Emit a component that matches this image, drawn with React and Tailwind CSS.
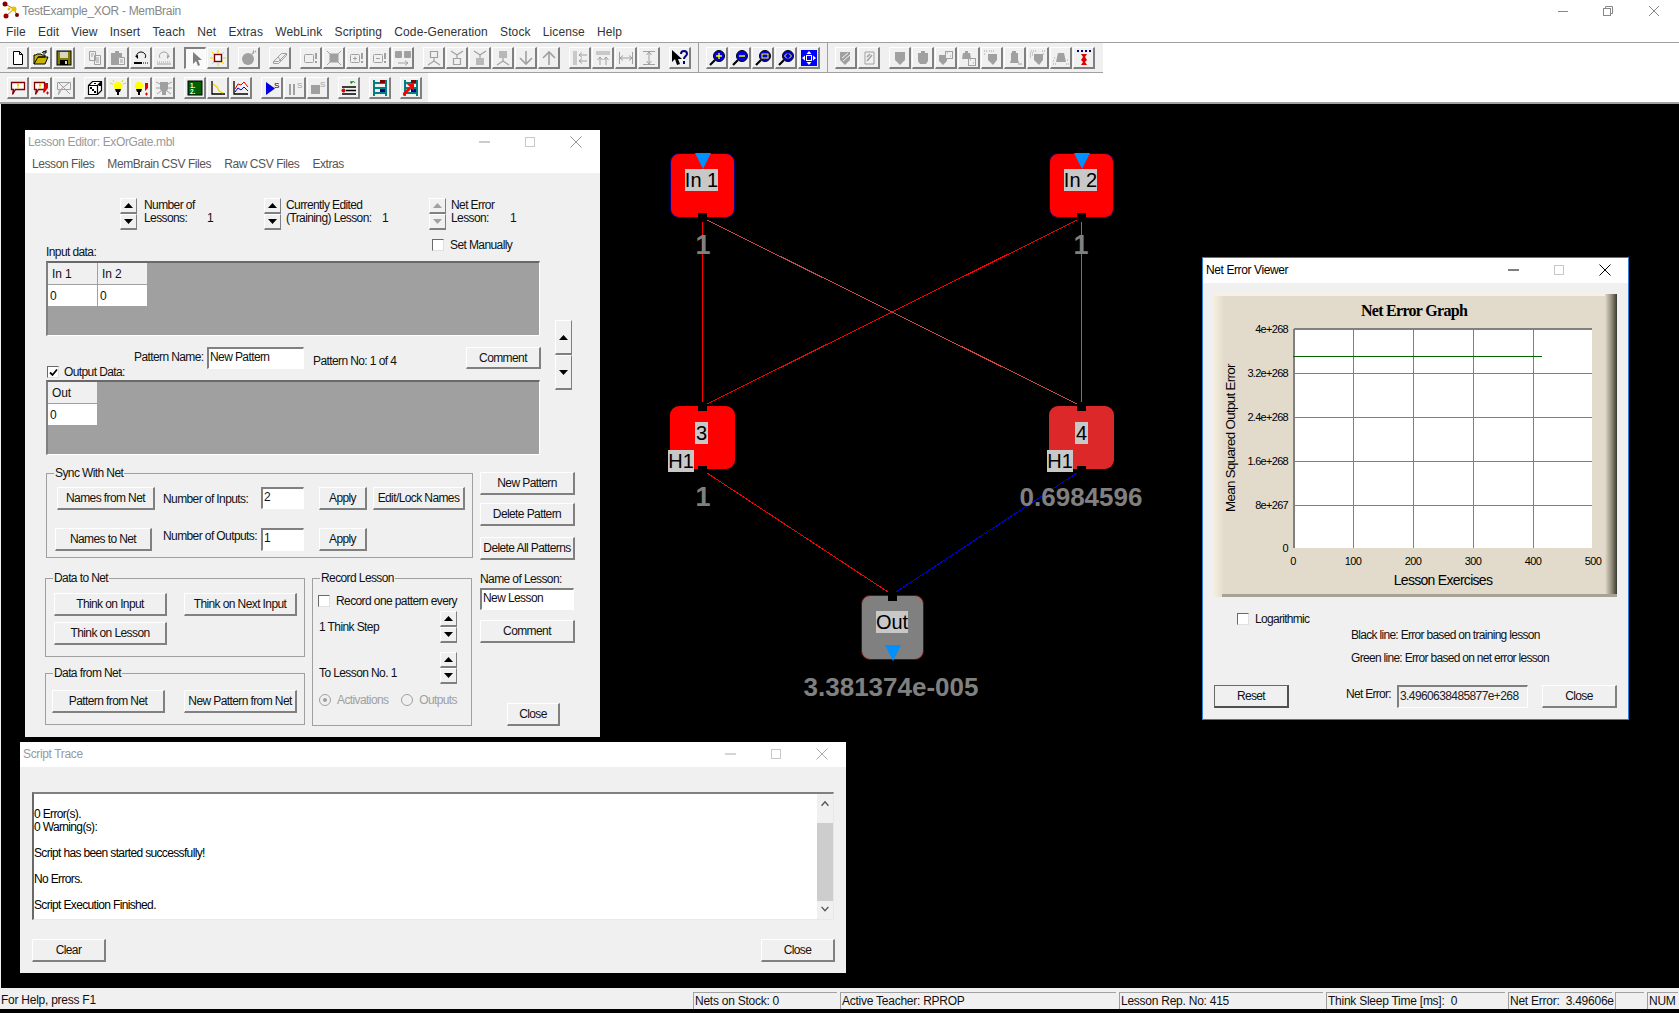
import React from "react";

const G = "#a0a0a0";

// toolbar glyphs, drawn on a 16x16 grid
const icons = {
  new: <path d="M3.5 1.5h6l3 3v10h-9zM9.5 1.5v3h3" fill="#fff" stroke="#000" />,
  open: (
    <>
      <path d="M1 14V5h2l1-1h4l1 1h3v2H5l-4 7h11l3-7H5" fill="#c8b400" stroke="#000" />
      <path d="M9 3c1-2 3-2 4-1M13 0v3h-3" fill="none" stroke="#000" />
    </>
  ),
  save: (
    <>
      <rect x="1" y="1" width="14" height="14" fill="#808000" stroke="#000" />
      <rect x="4" y="2" width="8" height="6" fill="#d8d8c0" />
      <rect x="4" y="10" width="8" height="5" fill="#000" />
      <rect x="9" y="11" width="2" height="3" fill="#d8d8c0" />
    </>
  ),
  copy: <path d="M2.5 1.5h6v9h-6zM7.5 5.5h6v9h-6zM4 4h3M4 6h2M9 8h3M9 10h3M9 12h3" fill="#f0f0f0" stroke={G} />,
  paste: (
    <>
      <path d="M1 3h4V1h4v2h3v4H8v8H1z" fill={G} />
      <path d="M8.5 7.5h6v7h-6zM10 10h3M10 12h3" fill="#f0f0f0" stroke={G} />
    </>
  ),
  undo: (
    <>
      <path d="M5 8C2 5 5 2 8 2s6 3 4 6" fill="none" stroke="#000" />
      <path d="M2 6l3 3V5z" fill="#000" />
      <path d="M1 12h8v2H1z" fill="#000" />
      <path d="M10 13h5" stroke="#000" strokeDasharray="1 1" />
    </>
  ),
  redo: (
    <>
      <path d="M11 8c3-3 0-6-3-6S2 5 4 8" fill="none" stroke={G} />
      <path d="M14 6l-3 3V5z" fill={G} />
      <path d="M1 12h14" stroke={G} strokeDasharray="1 1" />
      <path d="M1 14h14" stroke={G} />
    </>
  ),
  arrow: <path d="M5 1v12l3-3 2 5 2-1-2-5h4z" fill="#808080" />,
  select: (
    <>
      <rect x="4.5" y="4.5" width="7" height="7" fill="#fff" stroke="#800000" strokeWidth="1.4" />
      <path d="M8 0v3M8 13v3M0 8h3M13 8h3M2 2l2 2M14 2l-2 2M2 14l2-2M14 14l-2-2" stroke="#e8d800" />
    </>
  ),
  bomb: (
    <>
      <circle cx="7" cy="9" r="6" fill={G} />
      <path d="M11 4l2-2M14 1l1 1M12 1l1 0" stroke={G} strokeWidth="1.5" />
    </>
  ),
  eraser: <path d="M1.5 11.5l8-8h5l-8 8h-5zM1.5 11.5v2h5l8-8v-2M6 7l3 4" fill="none" stroke={G} />,
  nodeBang: (
    <>
      <rect x="1.5" y="4.5" width="9" height="8" rx="1" fill="none" stroke={G} />
      <path d="M13 3v6M13 11v2" stroke={G} strokeWidth="2" />
    </>
  ),
  nodeX: <path d="M4 4h8v8H4zM1 1l3 3M15 1l-3 3M1 15l3-3M15 15l-3-3" fill={G} stroke={G} />,
  plusBang: (
    <>
      <rect x="1.5" y="4.5" width="9" height="8" rx="1" fill="none" stroke={G} />
      <path d="M4 8.5h4M6 6.5v4" stroke={G} />
      <path d="M13 3v6M13 11v2" stroke={G} strokeWidth="2" />
    </>
  ),
  minusBang: (
    <>
      <rect x="1.5" y="4.5" width="9" height="8" rx="1" fill="none" stroke={G} />
      <path d="M4 8.5h4" stroke={G} />
      <path d="M13 3v6M13 11v2" stroke={G} strokeWidth="2" />
    </>
  ),
  merge: (
    <>
      <rect x="0" y="1" width="7" height="7" rx="1" fill={G} />
      <rect x="9" y="1" width="7" height="7" rx="1" fill={G} />
      <path d="M3 13h10M10 10.5l3 2.5-3 2.5" fill="none" stroke={G} />
    </>
  ),
  fig1: <path d="M4.5 1.5h7v6h-7zM8 8v3M8 11l-6 4M8 11l6 4" fill="none" stroke={G} strokeWidth="1.2" />,
  fig2: <path d="M4.5 8.5h7v6h-7zM8 8V5M8 5L2 1M8 5l6-4" fill="none" stroke={G} strokeWidth="1.2" />,
  fig3: (
    <>
      <path d="M8 8V5M8 5L2 1M8 5l6-4" fill="none" stroke={G} strokeWidth="1.2" />
      <path d="M4 8h8v7H4z" fill={G} opacity="0.7" />
    </>
  ),
  fig4: (
    <>
      <path d="M4 1h8v7H4z" fill={G} opacity="0.7" />
      <path d="M8 8v3M8 11l-6 4M8 11l6 4" fill="none" stroke={G} strokeWidth="1.2" />
    </>
  ),
  down: <path d="M8 1v13M2 8l6 6 6-6" fill="none" stroke={G} strokeWidth="1.6" />,
  up: <path d="M8 15V2M2 8l6-6 6 6" fill="none" stroke={G} strokeWidth="1.6" />,
  alignL: <path d="M2 1v14M4 1v14M15 5H7M10 2.5L7 5l3 2.5M15 11H7M10 8.5L7 11l3 2.5" fill="none" stroke={G} />,
  alignT: <path d="M1 2h14M1 4h14M5 15V7M2.5 10L5 7l2.5 3M11 15V7M8.5 10L11 7l2.5 3" fill="none" stroke={G} />,
  spreadH: <path d="M1.5 2v12M14.5 2v12M2 8h12M5 5.5L2 8l3 2.5M11 5.5L14 8l-3 2.5" fill="none" stroke={G} />,
  spreadV: <path d="M2 1.5h12M2 14.5h12M8 2v12M5.5 5L8 2l2.5 3M5.5 11L8 14l2.5-3" fill="none" stroke={G} />,
  help: (
    <>
      <path d="M0 0v12l3-3 2 6 3-1-2-5h4z" fill="#000" />
      <path d="M9 4c0-4 6-4 6 0 0 2-3 2-3 5" fill="none" stroke="#000080" strokeWidth="2" />
      <path d="M11 11h2v3h-2z" fill="#000080" />
    </>
  ),
  move: (
    <>
      <rect x="0" y="0" width="16" height="16" fill="#0000ff" />
      <path d="M8 1l2.5 3h-5zM8 15l2.5-3h-5zM1 8l3-2.5v5zM15 8l-3-2.5v5z" fill="#fff" />
      <rect x="5.5" y="5.5" width="5" height="5" fill="none" stroke="#fff" />
    </>
  ),
  shield1: (
    <>
      <path d="M2 2h10v8l-5 5-5-5z" fill={G} />
      <path d="M4 8l6-5M5 11l7-6" stroke="#f0f0f0" />
    </>
  ),
  shield2: (
    <>
      <path d="M4 2h9v12H4z" fill="none" stroke={G} />
      <path d="M6 11l5-6M6 7l3-3" stroke={G} strokeWidth="1.5" />
    </>
  ),
  shield3: <path d="M3 2h10v8l-5 5-5-5z" fill={G} />,
  shield4: <path d="M6 1h4v2h3v8l-2 3H5l-2-3V3h3z" fill={G} />,
  shield5: (
    <>
      <path d="M1 5h8v6l-4 4-4-4z" fill={G} />
      <rect x="7.5" y="1.5" width="7" height="7" fill="#f0f0f0" stroke={G} />
      <path d="M9 3h1M12 6h1" stroke={G} />
    </>
  ),
  shield6: (
    <>
      <path d="M4 1h3v2h2l1 6H1l1-6h2z" fill={G} />
      <rect x="7.5" y="8.5" width="7" height="7" fill="#f0f0f0" stroke={G} />
      <path d="M9 10h1M12 13h1" stroke={G} />
    </>
  ),
  shield7: (
    <>
      <path d="M4 4h9v6l-4 5-5-5z" fill={G} />
      <path d="M0 1h3M0 4h2M5 1h6" stroke={G} strokeDasharray="1 1" />
    </>
  ),
  shield8: (
    <>
      <path d="M5 1h4v2h2v7l1 3H3l1-3V3h1z" fill={G} />
      <path d="M14 13v2M12 13v2" stroke={G} />
    </>
  ),
  shield9: (
    <>
      <path d="M1 1h6M0 3h4M0 5h4M0 7h2M12 1h3M13 4h2" stroke={G} strokeDasharray="1 1" />
      <path d="M4 4h9v6l-4 5-5-5z" fill={G} />
    </>
  ),
  shield10: (
    <>
      <path d="M5 3h6l2 9H3z" fill={G} />
      <path d="M0 14h3M0 11h2M1 8h1M13 14h3M14 10h1" stroke={G} strokeDasharray="1 1" />
    </>
  ),
  zigzag: (
    <>
      <path d="M1 1h14" stroke="#000080" strokeWidth="2" strokeDasharray="2 2" />
      <path d="M5 4h6l-2 3 2 3-2 2 2 3H5l2-3-2-2 2-3z" fill="#e00000" />
    </>
  ),
  bubble: (
    <>
      <path d="M1.5 2.5h13v7h-9l-3 5 1-5h-2z" fill="#fff" stroke="#800000" strokeWidth="1.3" />
      <path d="M7 3.5h2v3H7zM7 7.5h2v1H7z" fill="#e8d800" />
    </>
  ),
  bubblePen: (
    <>
      <path d="M1.5 2.5h10v7h-6l-3 5 1-5h-2z" fill="#fff" stroke="#800000" strokeWidth="1.3" />
      <path d="M6 3.5h2v3H6zM6 7.5h2v1H6z" fill="#e8d800" />
      <path d="M12 3h3v5l-4 5-1-1z" fill="#e00000" />
      <path d="M13 13h3M14.5 11.5v3" stroke="#e00000" />
    </>
  ),
  bubbleOff: <path d="M1.5 2.5h13v7h-9l-3 5 1-5h-2zM2 2l12 12M14 2L4 10" fill="#f0f0f0" stroke={G} />,
  dice: (
    <>
      <path d="M1.5 5.5l4-4h9v9l-4 4h-9zM1.5 5.5h9v9M10.5 5.5l4-4" fill="#fff" stroke="#000" strokeWidth="1.2" />
      <path d="M3 7h2v2H3zM7 11h2v2H7zM5 9h2v2H5zM12 4h2v2h-2zM7 3h2v1H7z" fill="#000" />
    </>
  ),
  bulb: (
    <>
      <path d="M8 2a4 4 0 0 1 3 7H5a4 4 0 0 1 3-7z" fill="#ffff00" />
      <path d="M5 9h6l-1 3H6zM7 12h2v3H7z" fill="#000" />
      <path d="M0 3l3 1M16 3l-3 1M3 0l1 2M13 0l-1 2" stroke="#e8d800" />
    </>
  ),
  bulbPen: (
    <>
      <path d="M6 2a4 4 0 0 1 3 7H3a4 4 0 0 1 3-7z" fill="#ffff00" />
      <path d="M3 9h6l-1 3H4zM5 12h2v3H5z" fill="#000" />
      <path d="M12 3h3v5l-3 3z" fill="#e00000" />
      <path d="M12 14h3M13.5 12.5v3" stroke="#e00000" />
    </>
  ),
  bulbOff: (
    <>
      <path d="M4 2h8v7l-2 3v3H6v-3L4 9z" fill={G} />
      <path d="M0 2l4 2M16 2l-4 2M0 8h4M16 8h-4M1 14l4-3M15 14l-4-3" stroke={G} />
    </>
  ),
  board: (
    <>
      <rect x="1" y="1" width="14" height="14" fill="#006000" stroke="#000" />
      <text x="3" y="7.5" fontSize="6.5" fontWeight="700" fill="#fff" fontFamily="Liberation Sans">1.</text>
      <text x="3" y="13.5" fontSize="6.5" fontWeight="700" fill="#fff" fontFamily="Liberation Sans">2.</text>
    </>
  ),
  graph: (
    <>
      <path d="M2 1v13h13" fill="none" stroke="#000" strokeWidth="1.3" />
      <path d="M3 4l4 3 2 4 4 2" fill="none" stroke="#e8d800" strokeWidth="1.3" />
    </>
  ),
  graph2: (
    <>
      <path d="M1 1v13h14" fill="none" stroke="#000" strokeWidth="1.3" />
      <path d="M2 9l3-5 3 1 3-3 4 5" fill="none" stroke="#e00000" />
      <path d="M2 12l3-4 3 2 3-3 4 4" fill="none" stroke="#0000e0" />
    </>
  ),
  play: (
    <>
      <path d="M2 2v13l9-6.5z" fill="#0000e0" />
      <text x="10" y="8" fontSize="8" fill="#000" fontFamily="Liberation Sans">S</text>
    </>
  ),
  pause: (
    <>
      <path d="M2 4h2v11H2zM6 4h2v11H6z" fill={G} />
      <text x="10" y="8" fontSize="8" fill={G} fontFamily="Liberation Sans">S</text>
    </>
  ),
  stop: (
    <>
      <rect x="1" y="5" width="9" height="9" fill={G} />
      <text x="10" y="7" fontSize="8" fill={G} fontFamily="Liberation Sans">S</text>
    </>
  ),
  list: (
    <>
      <path d="M1 7h14M5 10.5h10M1 14h14" stroke="#000" strokeWidth="1.6" />
      <circle cx="2.5" cy="10.5" r="2" fill="#e00000" />
      <path d="M10 3c1-2 3-2 4 0" fill="none" stroke="#008000" />
      <path d="M9 1l3 1-2 2z" fill="#008000" />
    </>
  ),
  ladder: (
    <>
      <path d="M2 0v16M14 0v16M2 3h12M2 8h12M2 13h12" fill="none" stroke="#008080" strokeWidth="2" />
      <rect x="8" y="0" width="5" height="3" fill="#800000" />
      <rect x="8" y="9" width="5" height="3" fill="#000080" />
    </>
  ),
  ladderGo: (
    <>
      <path d="M2 0v16M14 0v16M2 3h12M2 8h12M2 13h12" fill="none" stroke="#008080" strokeWidth="2" />
      <rect x="8" y="0" width="5" height="3" fill="#800000" />
      <rect x="8" y="9" width="5" height="3" fill="#000080" />
      <path d="M0 15l7-7" stroke="#ff0000" strokeWidth="3" />
      <path d="M4 4h7v7z" fill="#ff0000" />
    </>
  ),
};

function Lens({ kind }) {
  return (
    <svg width="16" height="16" viewBox="0 0 16 16">
      <path d="M6 10l-5 5" stroke="#000" strokeWidth="2.2" />
      <circle cx="10" cy="6" r="5.5" fill="#0000e0" stroke="#000" />
      {kind === "in" && <path d="M7 6h6M10 3v6" stroke="#ffff00" strokeWidth="1.4" />}
      {kind === "out" && <path d="M7 6h6" stroke="#ffff00" strokeWidth="1.4" />}
      {kind === "box" && <rect x="7" y="4" width="6" height="4" fill="none" stroke="#ffff00" />}
      {kind === "fit" && <path d="M9 3.5L6.5 6 9 8.5M11 3.5L13.5 6 11 8.5" fill="none" stroke="#ffff00" />}
    </svg>
  );
}

function ToolBtn({ name, pressed }) {
  const lens = { zoomIn: "in", zoomOut: "out", zoomBox: "box", zoomFit: "fit" }[name];
  return (
    <div
      className={
        pressed
          ? "w-[22px] h-[22px] mr-px flex items-center justify-center bg-[#fafafa] border-t-2 border-l-2 border-r border-b border-t-[#808080] border-l-[#808080] border-r-white border-b-white"
          : "w-[22px] h-[22px] mr-px flex items-center justify-center bg-[#f0f0f0] border-t border-l border-r-2 border-b-2 border-t-white border-l-white border-r-[#808080] border-b-[#808080]"
      }
    >
      {lens ? (
        <Lens kind={lens} />
      ) : (
        <svg width="16" height="16" viewBox="0 0 16 16">
          {icons[name]}
        </svg>
      )}
    </div>
  );
}

function ToolRow({ groups, className }) {
  return (
    <div className={className}>
      {groups.map((g, i) =>
        g === "|" ? (
          <div key={i} className="w-px h-[30px] -mt-[4px] -ml-[2px] -mr-px bg-[#a0a0a0]" />
        ) : (
          <div key={i} className="flex">
            {g.map((n) => (
              <ToolBtn key={n} name={n} pressed={n === "arrow"} />
            ))}
          </div>
        )
      )}
    </div>
  );
}

const row1 = [
  ["new", "open", "save"],
  ["copy", "paste", "undo", "redo"],
  ["arrow", "select"],
  ["bomb"],
  ["eraser"],
  ["nodeBang", "nodeX", "plusBang", "minusBang", "merge"],
  ["fig1", "fig2", "fig3", "fig4", "down", "up"],
  ["alignL", "alignT", "spreadH", "spreadV"],
  ["help"],
  "|",
  ["zoomIn", "zoomOut", "zoomBox", "zoomFit", "move"],
  "|",
  ["shield1", "shield2"],
  ["shield3", "shield4", "shield5", "shield6", "shield7", "shield8", "shield9", "shield10", "zigzag"],
];

const row2 = [
  ["bubble", "bubblePen", "bubbleOff"],
  ["dice", "bulb", "bulbPen", "bulbOff"],
  ["board", "graph", "graph2"],
  ["play", "pause", "stop"],
  ["list"],
  ["ladder"],
  ["ladderGo"],
];

const menu = ["File", "Edit", "View", "Insert", "Teach", "Net", "Extras", "WebLink", "Scripting", "Code-Generation", "Stock", "License", "Help"];

function WinBtns({ color }) {
  return (
    <svg width="103" height="12" viewBox="0 0 103 12">
      <path d="M0 6h11" stroke={color} />
      <rect x="46.5" y="1.5" width="9" height="9" fill="none" stroke="#c8c8c8" />
      <path d="M91.5 0.5l11 11M102.5 0.5l-11 11" stroke={color} />
    </svg>
  );
}

function Btn({ children, className }) {
  return (
    <div
      className={
        "flex items-center justify-center shrink-0 whitespace-nowrap text-[12px] tracking-[-0.6px] text-[#111] bg-[#f0f0f0] border-t border-l border-r-2 border-b-2 border-t-white border-l-white border-r-[#808080] border-b-[#808080] " +
        className
      }
    >
      {children}
    </div>
  );
}

function Field({ children, className }) {
  return (
    <div
      className={
        "shrink-0 flex items-start pl-[1px] pt-[1px] whitespace-nowrap text-[12px] leading-[14px] tracking-[-0.6px] text-[#111] border-t-2 border-l-2 border-r border-b border-t-[#808080] border-l-[#808080] border-r-white border-b-white " +
        className
      }
    >
      {children}
    </div>
  );
}

function Spin({ disabled }) {
  const c = disabled ? "#a0a0a0" : "#000";
  const box =
    "w-[17px] h-[16px] flex items-center justify-center bg-[#f0f0f0] border-t border-l border-r border-b-2 border-t-white border-l-white border-r-[#808080] border-b-[#808080]";
  return (
    <div className="flex flex-col shrink-0">
      <div className={box}>
        <svg width="9" height="5" viewBox="0 0 9 5"><path d="M4.5 0L9 5H0z" fill={c} /></svg>
      </div>
      <div className={box}>
        <svg width="9" height="5" viewBox="0 0 9 5"><path d="M4.5 5L0 0h9z" fill={c} /></svg>
      </div>
    </div>
  );
}

function TallSpin() {
  const box =
    "w-[17px] h-[35px] flex items-center justify-center bg-[#f0f0f0] border-t border-l border-r border-b-2 border-t-white border-l-white border-r-[#808080] border-b-[#808080]";
  return (
    <div className="flex flex-col">
      <div className={box}>
        <svg width="9" height="5" viewBox="0 0 9 5"><path d="M4.5 0L9 5H0z" fill="#000" /></svg>
      </div>
      <div className={box}>
        <svg width="9" height="5" viewBox="0 0 9 5"><path d="M4.5 5L0 0h9z" fill="#000" /></svg>
      </div>
    </div>
  );
}

function Check({ checked }) {
  return (
    <div className="w-[12px] h-[12px] shrink-0 bg-white border-t border-l border-r border-b border-t-[#696969] border-l-[#696969] border-r-[#e0e0e0] border-b-[#e0e0e0] flex items-center justify-center">
      {checked && (
        <svg width="9" height="9" viewBox="0 0 9 9">
          <path d="M1 4.5l2.5 2.5L8 1.5" fill="none" stroke="#000" strokeWidth="1.8" />
        </svg>
      )}
    </div>
  );
}

function Radio({ dot }) {
  return (
    <svg width="12" height="12" viewBox="0 0 12 12" className="shrink-0">
      <circle cx="6" cy="6" r="5.5" fill="#f0f0f0" stroke="#a0a0a0" />
      {dot && <circle cx="6" cy="6" r="2" fill="#a0a0a0" />}
    </svg>
  );
}

function Group({ title, children, className }) {
  return (
    <fieldset className={"border border-[#a0a0a0] min-w-0 shrink-0 " + className}>
      <legend className="ml-[7px] px-[1px] text-[12px] leading-[12px] tracking-[-0.6px] text-[#111]">{title}</legend>
      {children}
    </fieldset>
  );
}

function GridCell({ head, children }) {
  return (
    <div
      className={
        head
          ? "h-[21px] pl-[4px] flex items-center text-[12px] tracking-[-0.1px] bg-[#f0f0f0] text-[#111]"
          : "h-[21px] pl-[2px] flex items-center text-[12px] bg-white text-[#111]"
      }
    >
      {children}
    </div>
  );
}

function DataGrid({ heads }) {
  return (
    <div className="w-[494px] h-[75px] bg-[#a0a0a0] border-t-2 border-l-2 border-r border-b border-t-[#696969] border-l-[#808080] border-r-white border-b-white">
      <div
        className={
          heads.length === 2
            ? "grid w-fit grid-cols-[49px_49px] gap-px"
            : "grid w-fit grid-cols-[49px] gap-px"
        }
      >
        {heads.map((h) => (
          <GridCell key={h} head>{h}</GridCell>
        ))}
        {heads.map((h) => (
          <GridCell key={h}>0</GridCell>
        ))}
      </div>
    </div>
  );
}

function LessonEditor() {
  return (
    <div className="absolute left-[24px] top-[26px] w-[575px] h-[607px] flex flex-col bg-[#f0f0f0]">
      <div className="h-[24px] pb-[1px] bg-white flex items-center justify-between pl-[3px] pr-[18px] shrink-0">
        <span className="text-[12px] tracking-[-0.36px] text-[#999]">Lesson Editor: ExOrGate.mbl</span>
        <WinBtns color="#999" />
      </div>
      <div className="h-[19px] pt-[1px] bg-white flex items-center pl-[7px] gap-[13px] shrink-0 text-[12px] tracking-[-0.42px] text-[#555]">
        <span>Lesson Files</span>
        <span>MemBrain CSV Files</span>
        <span>Raw CSV Files</span>
        <span>Extras</span>
      </div>

      <div className="flex pl-[95px] mt-[25px] h-[32px] text-[12px] leading-[13px] tracking-[-0.6px] text-[#111]">
        <div className="flex w-[144px]">
          <Spin />
          <div className="ml-[7px] w-[63px] pt-px">Number of<br />Lessons:</div>
          <div className="mt-[14px]">1</div>
        </div>
        <div className="flex w-[165px]">
          <Spin />
          <div className="ml-[5px] w-[96px] pt-px">Currently Edited<br />(Training) Lesson:</div>
          <div className="mt-[14px]">1</div>
        </div>
        <div className="flex">
          <Spin disabled />
          <div className="ml-[5px] w-[59px] pt-px">Net Error<br />Lesson:</div>
          <div className="mt-[14px]">1</div>
        </div>
      </div>

      <div className="flex h-[31px] text-[12px] tracking-[-0.6px] text-[#111]">
        <div className="ml-[21px] mt-[15px] leading-[14px] w-[386px]">Input data:</div>
        <div className="flex items-center gap-[6px] mt-[9px] h-[12px]">
          <Check />
          <span>Set Manually</span>
        </div>
      </div>

      <div className="flex pl-[21px] h-[194px]">
        <div className="flex flex-col w-[495px]">
          <DataGrid heads={["In 1", "In 2"]} />
          <div className="flex h-[44px] text-[12px] leading-[14px] tracking-[-0.6px] text-[#111]">
            <div className="flex items-center gap-[5px] w-[88px] h-[12px] mt-[30px] pl-[1px]">
              <Check checked />
              <span className="whitespace-nowrap">Output Data:</span>
            </div>
            <div className="w-[73px] mt-[14px] whitespace-nowrap">Pattern Name:</div>
            <Field className="w-[97px] h-[22px] mt-[11px] bg-white">New Pattern</Field>
            <div className="ml-[9px] mt-[18px] whitespace-nowrap">Pattern No: 1 of 4</div>
            <Btn className="w-[75px] h-[22px] mt-[11px] ml-auto">Comment</Btn>
          </div>
          <DataGrid heads={["Out"]} />
        </div>
        <div className="ml-[14px] mt-[59px]">
          <TallSpin />
        </div>
      </div>

      <div className="flex pl-[20px]">
        <div className="flex flex-col w-[435px]">
          <Group title="Sync With Net" className="ml-[1px] mt-[12px] w-[427px]">
            <div className="h-[78px] pt-[8px] flex flex-col gap-[18px] text-[12px] tracking-[-0.6px] text-[#111]">
              <div className="flex">
                <Btn className="ml-[10px] w-[98px] h-[23px]">Names from Net</Btn>
                <div className="ml-[8px] w-[98px] mt-[3px] leading-[18px] whitespace-nowrap">Number of Inputs:</div>
                <Field className="w-[43px] h-[22px] bg-white">2</Field>
                <Btn className="ml-[15px] w-[48px] h-[23px]">Apply</Btn>
                <Btn className="ml-[6px] w-[92px] h-[23px]">Edit/Lock Names</Btn>
              </div>
              <div className="flex">
                <Btn className="ml-[8px] w-[97px] h-[23px]">Names to Net</Btn>
                <div className="ml-[11px] w-[98px] leading-[16px] whitespace-nowrap">Number of Outputs:</div>
                <Field className="w-[43px] h-[23px] bg-white">1</Field>
                <Btn className="ml-[15px] w-[48px] h-[23px]">Apply</Btn>
              </div>
            </div>
          </Group>
          <div className="flex mt-[14px]">
            <div className="flex flex-col w-[267px]">
              <Group title="Data to Net" className="w-[260px]">
                <div className="h-[72px] pt-[9px] pl-[8px]">
                  <div className="flex gap-[17px]">
                    <Btn className="w-[113px] h-[23px]">Think on Input</Btn>
                    <Btn className="w-[113px] h-[23px]">Think on Next Input</Btn>
                  </div>
                  <Btn className="w-[113px] h-[23px] mt-[6px]">Think on Lesson</Btn>
                </div>
              </Group>
              <Group title="Data from Net" className="w-[260px] mt-[10px]">
                <div className="h-[45px] pt-[11px] pl-[6px] flex gap-[19px]">
                  <Btn className="w-[113px] h-[23px]">Pattern from Net</Btn>
                  <Btn className="w-[113px] h-[23px]">New Pattern from Net</Btn>
                </div>
              </Group>
            </div>
            <Group title="Record Lesson" className="w-[160px]">
              <div className="h-[141px] pl-[5px] pr-[14px] pt-[11px] text-[12px] leading-[14px] tracking-[-0.6px] text-[#111]">
                <div className="flex items-center gap-[6px] h-[12px] whitespace-nowrap">
                  <Check />
                  <span>Record one pattern every</span>
                </div>
                <div className="flex items-center justify-between mt-[4px] pl-[1px]">
                  <span>1 Think Step</span>
                  <Spin />
                </div>
                <div className="flex items-center justify-between mt-[9px] pl-[1px]">
                  <span className="mt-[9px]">To Lesson No. 1</span>
                  <Spin />
                </div>
                <div className="flex items-center h-[12px] mt-[10px] pl-px text-[#a0a0a0]">
                  <Radio dot />
                  <span className="ml-[6px] w-[73px]">Activations</span>
                  <Radio />
                  <span className="ml-[6px]">Outputs</span>
                </div>
              </div>
            </Group>
          </div>
        </div>
        <div className="flex flex-col w-[95px] mt-[17px] text-[12px] tracking-[-0.6px] text-[#111]">
          <Btn className="w-[95px] h-[23px]">New Pattern</Btn>
          <Btn className="w-[95px] h-[23px] mt-[8px]">Delete Pattern</Btn>
          <Btn className="w-[95px] h-[23px] mt-[11px]">Delete All Patterns</Btn>
          <div className="mt-[12px] h-[16px] leading-[14px] whitespace-nowrap">Name of Lesson:</div>
          <Field className="w-[94px] h-[22px] bg-white">New Lesson</Field>
          <Btn className="w-[95px] h-[23px] mt-[10px]">Comment</Btn>
          <Btn className="w-[53px] h-[23px] mt-[60px] ml-[27px]">Close</Btn>
        </div>
      </div>
    </div>
  );
}

function ErrorChart() {
  const vLines = [139, 199, 259, 319];
  const hLines = [79, 123, 167, 211];
  const yLabels = [["4e+268", 35], ["3.2e+268", 79], ["2.4e+268", 123], ["1.6e+268", 167], ["8e+267", 211], ["0", 254]];
  const xLabels = [["0", 79], ["100", 139], ["200", 199], ["300", 259], ["400", 319], ["500", 379]];
  return (
    <svg width="403" height="303" viewBox="0 0 403 303" className="block" fontFamily="Liberation Sans">
      <defs>
        <linearGradient id="chartL"><stop offset="0" stopColor="#f6eedb" /><stop offset="1" stopColor="#e2dbcc" /></linearGradient>
        <linearGradient id="chartR"><stop offset="0" stopColor="#e2dbcc" /><stop offset="0.6" stopColor="#8a8474" /><stop offset="1" stopColor="#3a3830" /></linearGradient>
      </defs>
      <rect width="403" height="303" fill="#e2dbcc" />
      <rect width="10" height="303" fill="url(#chartL)" />
      <rect x="391" width="12" height="303" fill="url(#chartR)" />
      <rect width="391" height="2" fill="#f8f1e0" />
      <rect x="8" y="300" width="395" height="3" fill="#a8a294" />
      <text x="200" y="22" textAnchor="middle" fontFamily="Liberation Serif" fontWeight="700" fontSize="16" fill="#000">Net Error Graph</text>
      <rect x="80" y="35" width="298" height="219" fill="#fff" />
      {vLines.map((x) => <path key={x} d={`M${x + 0.5} 35V254`} stroke="#808080" />)}
      {hLines.map((y) => <path key={y} d={`M80 ${y + 0.5}H378`} stroke="#808080" />)}
      <path d="M80 35V254M80 35H378" stroke="#808080" strokeWidth="2" fill="none" />
      <path d="M79 62.5H328" stroke="#006400" />
      {yLabels.map(([t, y]) => <text key={t} x="74" y={y + 4} textAnchor="end" fontSize="11" fill="#000">{t}</text>)}
      {xLabels.map(([t, x]) => <text key={t} x={x} y="271" textAnchor="middle" fontSize="11" fill="#000">{t}</text>)}
      <text x="229" y="291" textAnchor="middle" fontSize="14" fill="#000">Lesson Exercises</text>
      <text transform="translate(21 144) rotate(-90)" textAnchor="middle" fontSize="13.4" fill="#000">Mean Squared Output Error</text>
    </svg>
  );
}

function NetErrorViewer() {
  return (
    <div className="absolute left-[1201px] top-[153px] w-[427px] h-[463px] flex flex-col bg-[#f0f0f0] border border-[#2f7fd6] text-[12px] tracking-[-0.7px] text-[#111]">
      <div className="h-[25px] pb-[2px] bg-white flex items-center justify-between pl-[3px] pr-[17px] shrink-0 tracking-[-0.4px]">
        <span className="text-[#000]">Net Error Viewer</span>
        <WinBtns color="#000" />
      </div>
      <div className="ml-[11px] mt-[11px]">
        <ErrorChart />
      </div>
      <div className="flex items-center gap-[6px] ml-[34px] mt-[16px] h-[12px]">
        <Check />
        <span>Logarithmic</span>
      </div>
      <div className="ml-[148px] mt-[3px] leading-[14px]">Black line: Error based on training lesson</div>
      <div className="ml-[148px] mt-[9px] leading-[14px]">Green line: Error based on net error lesson</div>
      <div className="flex mt-[20px] ml-[11px]">
        <div className="w-[75px] h-[23px] flex items-center justify-center bg-[#f0f0f0] border border-r-2 border-b-2 border-t-[#696969] border-l-[#696969] border-r-[#505050] border-b-[#505050]">Reset</div>
        <div className="ml-[57px] w-[51px] leading-[18px] whitespace-nowrap">Net Error:</div>
        <Field className="w-[131px] h-[23px] pt-[2px] text-[#222]">3.4960638485877e+268</Field>
        <Btn className="w-[75px] h-[23px] ml-[14px]">Close</Btn>
      </div>
    </div>
  );
}

const traceLines = ["", "0 Error(s).", "0 Warning(s):", "", "Script has been started successfully!", "", "No Errors.", "", "Script Execution Finished."];

function ScriptTrace() {
  return (
    <div className="absolute left-[19px] top-[638px] w-[826px] h-[231px] flex flex-col bg-[#f0f0f0]">
      <div className="h-[25px] pb-[2px] bg-white flex items-center justify-between pl-[3px] pr-[18px] shrink-0">
        <span className="text-[12px] tracking-[-0.36px] text-[#999]">Script Trace</span>
        <WinBtns color="#aaa" />
      </div>
      <div className="ml-[12px] mt-[25px] w-[802px] h-[128px] flex bg-white border-t-2 border-l-2 border-r border-b border-t-[#808080] border-l-[#696969] border-r-[#e8e8e8] border-b-[#e8e8e8]">
        <div className="flex-1 pt-[1px] text-[12px] leading-[13px] tracking-[-0.65px] text-[#000]">
          {traceLines.map((l, i) => (
            <div key={i} className="h-[13px]">{l}</div>
          ))}
        </div>
        <div className="w-[16px] flex flex-col items-center bg-[#f0f0f0]">
          <svg width="10" height="18" viewBox="0 0 10 18"><path d="M1.5 12L5 8l3.5 4" fill="none" stroke="#555" strokeWidth="1.4" /></svg>
          <div className="w-[16px] h-[80px] mt-[11px] bg-[#cdcdcd]" />
          <svg width="10" height="18" viewBox="0 0 10 18" className="mt-auto"><path d="M1.5 6L5 10l3.5-4" fill="none" stroke="#555" strokeWidth="1.4" /></svg>
        </div>
      </div>
      <div className="flex justify-between ml-[12px] mr-[11px] mt-[19px]">
        <Btn className="w-[74px] h-[23px]">Clear</Btn>
        <Btn className="w-[74px] h-[23px]">Close</Btn>
      </div>
    </div>
  );
}

function Marker({ className }) {
  return (
    <svg width="16" height="16" viewBox="0 0 16 16" className={"absolute " + className}>
      <path d="M0 0h16L8 16z" fill="#0090ff" />
    </svg>
  );
}

function Notch({ className }) {
  return <div className={"absolute w-[9px] h-[7px] bg-black " + className} />;
}

function NodeLabel({ children, className }) {
  return (
    <div className={"absolute h-[22px] flex items-center justify-center whitespace-nowrap bg-[#c8c8c8] text-[20px] text-black " + className}>
      {children}
    </div>
  );
}

function Value({ children, className }) {
  return (
    <div className={"absolute -translate-x-1/2 -translate-y-1/2 font-bold text-[#808080] whitespace-nowrap leading-none " + className}>
      {children}
    </div>
  );
}

function NetCanvas() {
  return (
    <>
      <svg width="1678" height="884" viewBox="0 0 1678 884" className="absolute left-0 top-0" shapeRendering="crispEdges">
        <path d="M701.5 118V298" stroke="#ff0000" />
        <path d="M706 116L1076 300" stroke="#c84848" />
        <path d="M1076 116L706 300" stroke="#ff0000" />
        <path d="M1080.5 118V298" stroke="#b05a68" />
        <path d="M706 369L887 488" stroke="#ff0000" />
        <path d="M1076 369L895 488" stroke="#0000e0" />
      </svg>

      <div className="absolute left-[669px] top-[49px] w-[65px] h-[65px] rounded-[9px] bg-[#ff0000] border border-[#000080]" />
      <Marker className="left-[694px] top-[49px]" />
      <NodeLabel className="left-[684px] top-[65px] w-[33px]">In 1</NodeLabel>
      <Notch className="left-[697px] top-[109px]" />

      <div className="absolute left-[1048px] top-[49px] w-[65px] h-[65px] rounded-[9px] bg-[#ff0000] border border-[#000080]" />
      <Marker className="left-[1073px] top-[49px]" />
      <NodeLabel className="left-[1063px] top-[65px] w-[33px]">In 2</NodeLabel>
      <Notch className="left-[1076px] top-[109px]" />

      <div className="absolute left-[669px] top-[302px] w-[65px] h-[63px] rounded-[9px] bg-[#ff0000]" />
      <NodeLabel className="left-[694px] top-[318px] w-[13px]">3</NodeLabel>
      <NodeLabel className="left-[667px] top-[346px] w-[26px]">H1</NodeLabel>
      <Notch className="left-[697px] top-[300px]" />
      <Notch className="left-[697px] top-[362px]" />

      <div className="absolute left-[1048px] top-[302px] w-[65px] h-[63px] rounded-[9px] bg-[#dc2828]" />
      <NodeLabel className="left-[1074px] top-[318px] w-[13px]">4</NodeLabel>
      <NodeLabel className="left-[1046px] top-[346px] w-[26px]">H1</NodeLabel>
      <Notch className="left-[1076px] top-[300px]" />
      <Notch className="left-[1076px] top-[362px]" />

      <div className="absolute left-[860px] top-[491px] w-[63px] h-[65px] rounded-[9px] bg-[#808080] border border-[#800000]" />
      <NodeLabel className="left-[875px] top-[507px] w-[32px]">Out</NodeLabel>
      <Marker className="left-[884px] top-[541px]" />
      <Notch className="left-[887px] top-[490px]" />

      <Value className="left-[702px] top-[141px] text-[27px]">1</Value>
      <Value className="left-[1080px] top-[141px] text-[27px]">1</Value>
      <Value className="left-[702px] top-[393px] text-[27px]">1</Value>
      <Value className="left-[1080px] top-[393px] text-[26px]">0.6984596</Value>
      <Value className="left-[890px] top-[583px] text-[26px]">3.381374e-005</Value>
    </>
  );
}

const statusPanes = [
  ["Nets on Stock: 0", "w-[144px]"],
  ["Active Teacher: RPROP", "w-[276px]"],
  ["Lesson Rep. No: 415", "w-[204px]"],
  ["Think Sleep Time [ms]:  0", "w-[179px]"],
  ["Net Error:  3.49606e", "w-[104px]"],
  ["", "w-[29px]"],
  ["NUM", "w-[31px]"],
];

export default function App() {
  return (
    <div
      className="w-[1679px] h-[1013px] flex flex-col overflow-hidden bg-black"
      style={{ fontFamily: '"Liberation Sans", Arial, sans-serif' }}
    >
      <div className="h-[21px] bg-white flex items-center justify-between shrink-0">
        <div className="flex items-center">
          <svg width="19" height="19" viewBox="0 0 19 19" className="ml-px">
            <path d="M4 3l9 5-8 7M13 8l3 6" stroke="#c08000" fill="none" />
            <circle cx="4" cy="3" r="2.5" fill="#800000" />
            <circle cx="13" cy="8" r="2.5" fill="#e8c000" />
            <circle cx="5" cy="15" r="2.5" fill="#a00000" />
            <circle cx="16" cy="14" r="2" fill="#800000" />
            <circle cx="8" cy="8" r="1.5" fill="#e8c000" />
          </svg>
          <span className="ml-[2px] text-[12px] tracking-[-0.3px] text-[#888]">TestExample_XOR - MemBrain</span>
        </div>
        <svg width="101" height="12" viewBox="0 0 101 12" className="mr-[20px]">
          <path d="M0 6.5h10" stroke="#888" />
          <rect x="45.5" y="3.5" width="7" height="7" fill="none" stroke="#888" />
          <path d="M47.5 3.5v-2h7v7h-2" fill="none" stroke="#888" />
          <path d="M91 1l10 10M101 1L91 11" stroke="#888" />
        </svg>
      </div>
      <div className="h-[21px] bg-white flex items-center shrink-0 text-[12px] text-[#333]">
        {menu.map((m) => (
          <span key={m} className="px-[6.1px] tracking-[0.1px]">{m}</span>
        ))}
      </div>
      <div className="h-[1px] bg-[#a0a0a0] shrink-0" />
      <div className="h-[30px] bg-white shrink-0">
        <ToolRow groups={row1} className="w-[1103px] h-[30px] flex gap-[8px] pl-[7px] pt-[4px] bg-[#f0f0f0] border-b border-b-[#a0a0a0]" />
      </div>
      <div className="h-[29px] bg-white shrink-0">
        <ToolRow groups={row2} className="w-[428px] h-[29px] flex gap-[8px] pl-[7px] pt-[4px] bg-[#f0f0f0]" />
      </div>
      <div className="h-[2px] bg-[#a0a0a0] shrink-0" />
      <div className="relative h-[884px] shrink-0 bg-black border-l border-l-[#f0f0f0]">
        <NetCanvas />
        <LessonEditor />
        <NetErrorViewer />
        <ScriptTrace />
      </div>
      <div className="h-[21px] bg-[#f0f0f0] flex items-center shrink-0 text-[12px] tracking-[-0.25px] text-[#111]">
        <span className="pl-px w-[693px] mt-[3px]">For Help, press F1</span>
        <div className="flex gap-[3px]">
          {statusPanes.map(([t, w], i) => (
            <div
              key={i}
              className={"h-[17px] mt-[3px] pl-px flex items-center whitespace-pre border-t border-l border-t-[#a0a0a0] border-l-[#a0a0a0] " + w}
            >
              {t}
            </div>
          ))}
        </div>
      </div>
    </div>
  );
}
